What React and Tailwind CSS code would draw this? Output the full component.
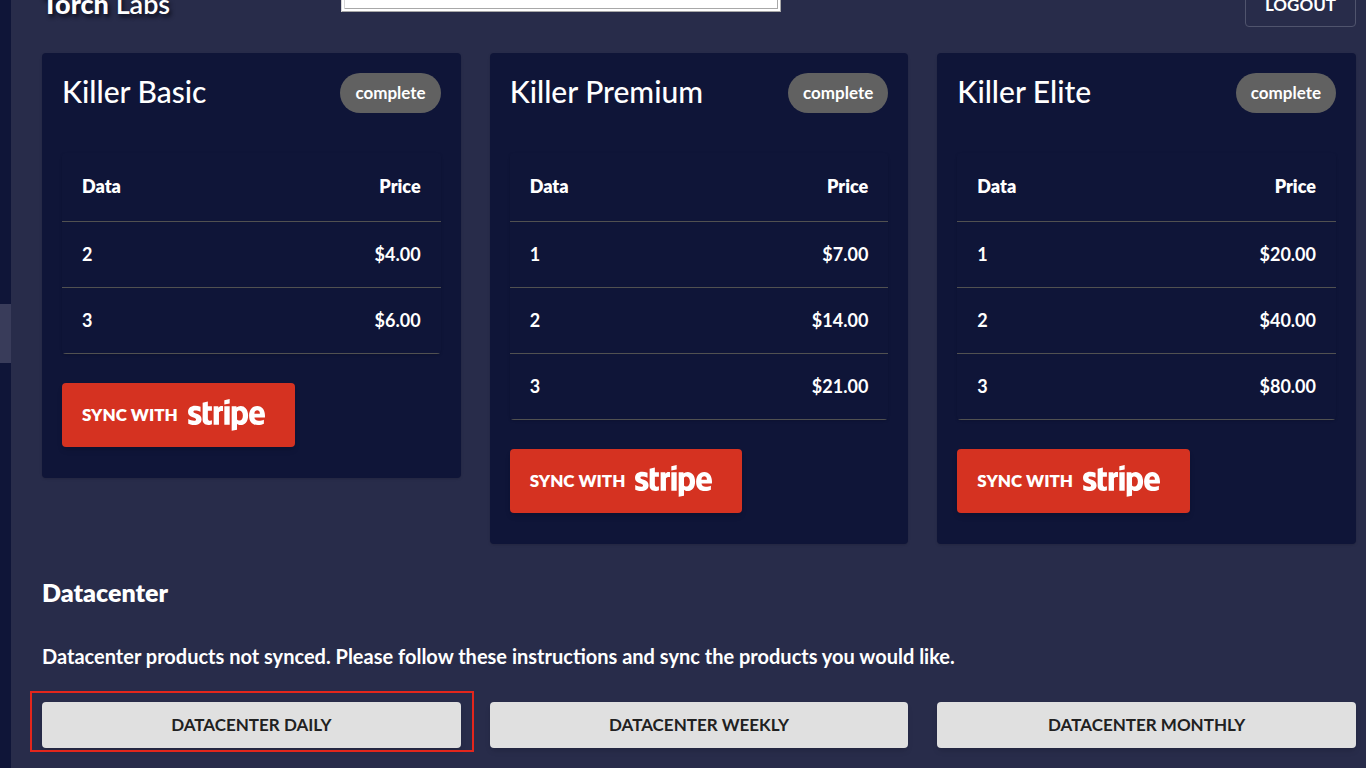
import { FaStripe } from 'react-icons/fa';

const plans = [
  { name: 'Killer Basic', rows: [['2', '$4.00'], ['3', '$6.00']] },
  { name: 'Killer Premium', rows: [['1', '$7.00'], ['2', '$14.00'], ['3', '$21.00']] },
  { name: 'Killer Elite', rows: [['1', '$20.00'], ['2', '$40.00'], ['3', '$80.00']] },
];

function PlanCard({ name, rows }) {
  return (
    <section className="rounded bg-[#0f1538] px-5 pt-5 pb-[31px] shadow">
      <div className="flex items-start justify-between">
        <h2 className="text-[30px] leading-9 font-medium">{name}</h2>
        <span className="flex h-10 items-center rounded-full bg-[#616161] px-[15px] text-[17px] font-bold">
          complete
        </span>
      </div>
      <div className="mt-10 overflow-hidden rounded shadow">
        <table className="w-full text-[18px] font-bold">
          <thead>
            <tr className="h-[68px] border-b border-[#515151]">
              <th className="px-5 text-left font-extrabold">Data</th>
              <th className="px-5 text-right font-extrabold">Price</th>
            </tr>
          </thead>
          <tbody>
            {rows.map(([data, price]) => (
              <tr key={data} className="h-[66px] border-b border-[#515151]">
                <td className="px-5">{data}</td>
                <td className="px-5 text-right">{price}</td>
              </tr>
            ))}
          </tbody>
        </table>
      </div>
      <button
        type="button"
        className="mt-[29px] flex h-16 items-center gap-[10px] rounded bg-[#d53221] pr-[30px] pl-5 text-[17px] font-extrabold shadow-md"
      >
        SYNC WITH
        <FaStripe className="h-[62px] w-[77px]" aria-label="Stripe" />
      </button>
    </section>
  );
}

export default function App() {
  return (
    <div className="flex h-screen overflow-hidden bg-[#282c4a] font-['Lato',sans-serif] text-white">
      <nav className="w-[11px] shrink-0 bg-[#0f1538] pt-[304px]">
        <div className="h-[59px] bg-[#393c5a]" />
      </nav>
      <main className="min-w-0 grow pr-[10px] pl-[31px]">
        <header className="grid h-[53px] grid-cols-[1fr_440px_1fr] items-start">
          <h1 className="-mt-3 text-[27px] leading-8 font-semibold [text-shadow:2px_3px_4px_#0b0d1c]">
            <b className="font-black">Torch</b> Labs
          </h1>
          <input
            type="text"
            aria-label="Search"
            className="-mt-8 -ml-[138px] h-11 w-[440px] border-4 border-double border-[#d6d6d6] border-r-[#a8a8a8] border-b-[#a8a8a8] bg-white text-black"
          />
          <button
            type="button"
            className="-mt-[18px] h-[45px] justify-self-end rounded border border-[#50546d] px-[19px] text-[17px] font-bold"
          >
            LOGOUT
          </button>
        </header>
        <div className="grid grid-cols-3 items-start gap-[29px]">
          {plans.map((plan) => (
            <PlanCard key={plan.name} {...plan} />
          ))}
        </div>
        <h2 className="mt-8 text-[25px] leading-8 font-extrabold">Datacenter</h2>
        <p className="mt-8 text-[20px] leading-8 font-bold">
          Datacenter products not synced. Please follow these instructions and sync the products you would like.
        </p>
        <div className="mt-[30px] grid grid-cols-3 gap-[29px] text-[#212121]">
          <div className="relative">
            <button type="button" className="h-[46px] w-full rounded bg-[#e0e0e0] text-[17px] font-bold shadow-md">
              DATACENTER DAILY
            </button>
            <div className="pointer-events-none absolute -top-[11px] -right-[13px] -bottom-1 -left-3 border-2 border-[#e3261c]" />
          </div>
          <button type="button" className="h-[46px] rounded bg-[#e0e0e0] text-[17px] font-bold shadow-md">
            DATACENTER WEEKLY
          </button>
          <button type="button" className="h-[46px] rounded bg-[#e0e0e0] text-[17px] font-bold shadow-md">
            DATACENTER MONTHLY
          </button>
        </div>
      </main>
    </div>
  );
}
